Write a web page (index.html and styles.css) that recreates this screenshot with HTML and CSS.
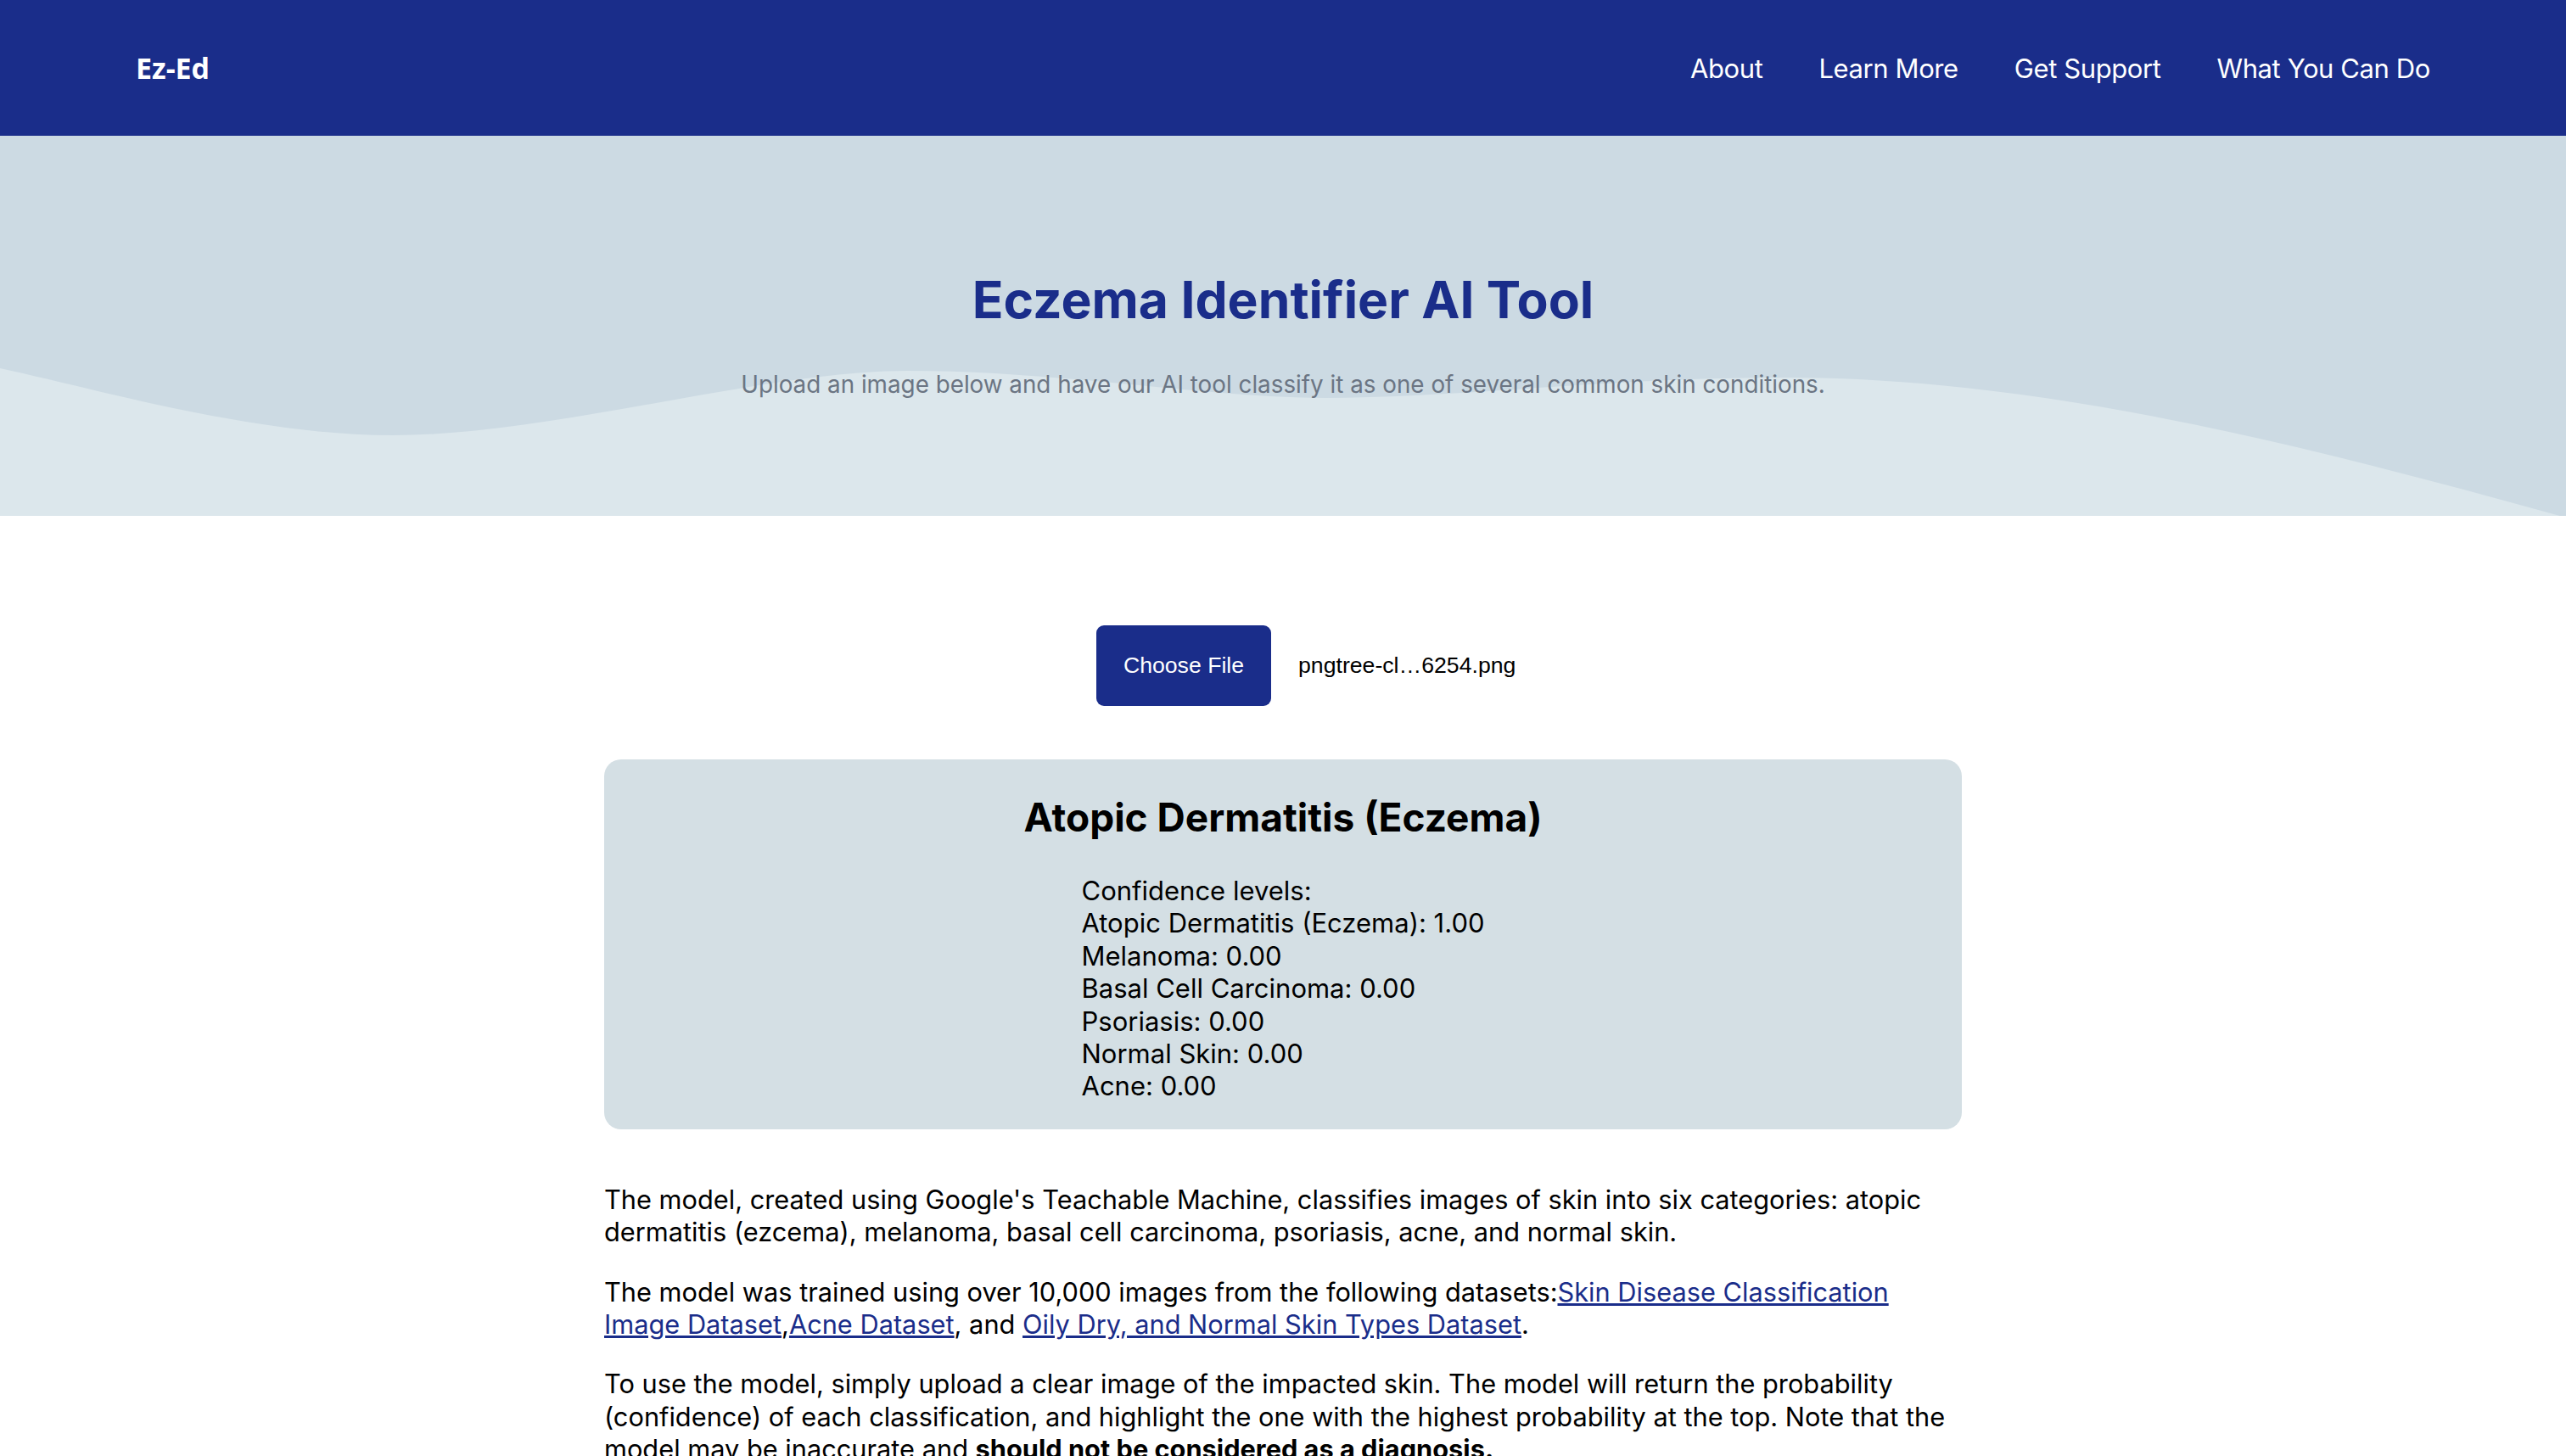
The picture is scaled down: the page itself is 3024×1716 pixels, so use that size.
FILE: index.html
```html
<!DOCTYPE html>
<html lang="en">
<head>
<meta charset="utf-8">
<title>Ez-Ed — Eczema Identifier AI Tool</title>
<link rel="stylesheet" href="styles.css">
</head>
<body>
<header class="topbar">
  <div class="logo">Ez-Ed</div>
  <nav class="nav">
    <a href="#">About</a>
    <a href="#">Learn More</a>
    <a href="#">Get Support</a>
    <a href="#">What You Can Do</a>
  </nav>
</header>

<section class="hero">
  <svg class="wave" viewBox="0 0 3024 448" preserveAspectRatio="none" aria-hidden="true">
    <path d="M0,274 C120,300 300,353 463,353 C650,353 900,277 1070,277 C1250,277 1420,309 1562,309 C1720,309 1900,285 2102,285 C2400,285 2700,360 3024,450 L3024,448 L0,448 Z" fill="#dce7ec"/>
  </svg>
  <div class="hero-content">
    <h1 class="hero-title">Eczema Identifier AI Tool</h1>
    <p class="hero-sub">Upload an image below and have our AI tool classify it as one of several common skin conditions.</p>
  </div>
</section>

<main class="main">
  <div class="upload">
    <div class="file-input">
      <span class="file-btn">Choose File</span>
      <span class="file-name">pngtree-cl…6254.png</span>
    </div>
  </div>

  <div class="result">
    <h2 class="result-title">Atopic Dermatitis (Eczema)</h2>
    <div class="levels">
      <div>Confidence levels:</div>
      <div>Atopic Dermatitis (Eczema): 1.00</div>
      <div>Melanoma: 0.00</div>
      <div>Basal Cell Carcinoma: 0.00</div>
      <div>Psoriasis: 0.00</div>
      <div>Normal Skin: 0.00</div>
      <div>Acne: 0.00</div>
    </div>
  </div>

  <p class="text">The model, created using Google's Teachable Machine, classifies images of skin into six categories: atopic dermatitis (ezcema), melanoma, basal cell carcinoma, psoriasis, acne, and normal skin.</p>
  <p class="text">The model was trained using over 10,000 images from the following datasets:<a href="#">Skin Disease Classification Image Dataset</a>,<a href="#">Acne Dataset</a>, and <a href="#">Oily Dry, and Normal Skin Types Dataset</a>.</p>
  <p class="text">To use the model, simply upload a clear image of the impacted skin. The model will return the probability (confidence) of each classification, and highlight the one with the highest probability at the top. Note that the model may be inaccurate and <strong>should not be considered as a diagnosis.</strong></p>
</main>
</body>
</html>
```

FILE: styles.css
```css
html, body {
  margin: 0;
  padding: 0;
  background: #ffffff;
}

body {
  font-family: Inter, "Noto Sans", "Liberation Sans", sans-serif;
  color: #000000;
}

.topbar {
  height: 160px;
  background: #1a2d8a;
  display: flex;
  align-items: center;
  justify-content: space-between;
  padding: 0 160px;
  box-sizing: border-box;
}

.logo {
  font-family: "Open Sans", Inter, sans-serif;
  font-weight: 700;
  font-size: 34px;
  color: #ffffff;
}

.nav {
  display: flex;
  gap: 66px;
}

.nav a {
  color: #ffffff;
  text-decoration: none;
  font-size: 31px;
  letter-spacing: -0.4px;
}

.hero {
  position: relative;
  height: 448px;
  background: #ccdae3;
  overflow: hidden;
}

.wave {
  position: absolute;
  left: 0;
  bottom: 0;
  width: 100%;
  height: 100%;
  display: block;
}

.hero-content {
  position: relative;
  padding-top: 155px;
  text-align: center;
}

.hero-title {
  margin: 0;
  font-size: 60.6px;
  line-height: 76px;
  font-weight: 700;
  color: #1a2d8a;
}

.hero-sub {
  margin: 45px 0 0;
  font-size: 27.8px;
  line-height: 34px;
  color: #6b7583;
}

.main {
  width: 1600px;
  margin: 0 auto;
  padding-top: 129px;
  padding-bottom: 60px;
}

.upload {
  display: flex;
  justify-content: center;
}

.file-input {
  width: 440px;
  display: flex;
  align-items: center;
  gap: 32px;
  font-family: "Liberation Sans", Arial, sans-serif;
  font-size: 26.67px;
  white-space: nowrap;
}

.file-btn {
  flex: 0 0 206px;
  display: flex;
  align-items: center;
  justify-content: center;
  height: 95px;
  background: #1a2d8a;
  color: #ffffff;
  border-radius: 9px;
}

.file-name {
  color: #000000;
}

.result {
  margin-top: 63px;
  background: #d4dfe4;
  border-radius: 20px;
  padding: 40px 0 31px;
  text-align: center;
}

.result-title {
  margin: 0;
  font-size: 46px;
  line-height: 56px;
  font-weight: 700;
}

.levels {
  display: inline-block;
  text-align: left;
  margin-top: 40px;
  font-size: 31px;
  line-height: 38.4px;
}

.text {
  margin: 64px 0 0;
  font-size: 30.75px;
  line-height: 38.6px;
}

.text + .text {
  margin-top: 31.5px;
}

.text a {
  color: #1a2d8a;
}
```
